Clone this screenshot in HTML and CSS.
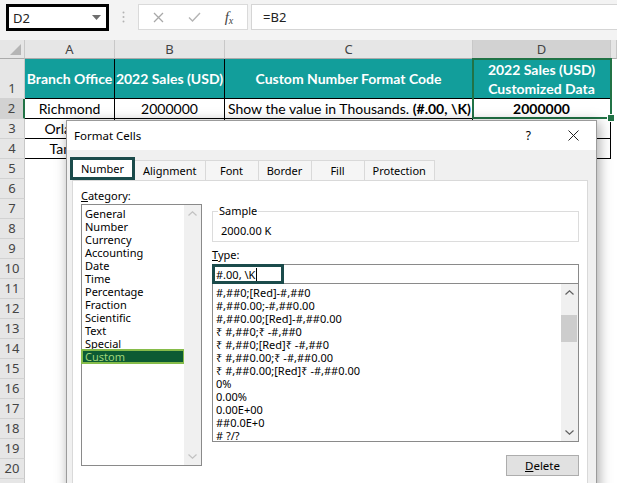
FILE: index.html
```html
<!DOCTYPE html>
<html lang="en">
<head>
    <meta charset="UTF-8">
    <meta name="viewport" content="width=device-width, initial-scale=1.0">
    <title>Format Cells</title>
    <link rel="stylesheet" href="styles.css">
</head>
<body>
    <div class="app">
        <div class="formula-bar">
            <div class="name-box">
                <span>D2</span>
                <svg width="9" height="5" viewBox="0 0 9 5"><polygon points="0,0 9,0 4.5,5" fill="#6e6e6e"/></svg>
            </div>
            <div class="bar-dots">
                <svg width="3" height="12" viewBox="0 0 3 12"><circle cx="1.5" cy="1.5" r="1" fill="#b3b3b3"/><circle cx="1.5" cy="6" r="1" fill="#b3b3b3"/><circle cx="1.5" cy="10.5" r="1" fill="#b3b3b3"/></svg>
            </div>
            <div class="bar-buttons">
                <span class="bar-icon"><svg width="11" height="11" viewBox="0 0 11 11"><path d="M1 1 L10 10 M10 1 L1 10" stroke="#a8a8a8" stroke-width="1.3"/></svg></span>
                <span class="bar-icon"><svg width="13" height="10" viewBox="0 0 13 10"><path d="M1 5.5 L4.5 9 L12 1" fill="none" stroke="#b4b4b4" stroke-width="1.4"/></svg></span>
                <span class="fx">f<span class="fx-sub">x</span></span>
            </div>
            <div class="formula-input">=B2</div>
        </div>

        <div class="sheet">
            <div class="corner"><svg width="11" height="11" viewBox="0 0 11 11"><polygon points="11,0 11,11 0,11" fill="#b5b5b5"/></svg></div>
            <div class="col-head">A</div>
            <div class="col-head">B</div>
            <div class="col-head">C</div>
            <div class="col-head active">D</div>
            <div class="col-head"></div>

            <div class="row-head tall">1</div>
            <div class="cell head">Branch Office</div>
            <div class="cell head">2022 Sales (USD)</div>
            <div class="cell head">Custom Number Format Code</div>
            <div class="cell head">2022 Sales (USD)<br>Customized Data</div>
            <div class="blank"></div>

            <div class="row-head active">2</div>
            <div class="cell">Richmond</div>
            <div class="cell">2000000</div>
            <div class="cell left"><span>Show the value in Thousands. <b>(#.00, \K)</b></span></div>
            <div class="cell"><b>2000000</b></div>
            <div class="blank"></div>

            <div class="row-head">3</div>
            <div class="cell">Orlando</div>
            <div class="cell"></div>
            <div class="cell"></div>
            <div class="cell"></div>
            <div class="blank"></div>

            <div class="row-head">4</div>
            <div class="cell">Tampa</div>
            <div class="cell"></div>
            <div class="cell"></div>
            <div class="cell"></div>
            <div class="blank"></div>

            <div class="row-head">5</div><div class="empty-row"></div>
            <div class="row-head">6</div><div class="empty-row"></div>
            <div class="row-head">7</div><div class="empty-row"></div>
            <div class="row-head">8</div><div class="empty-row"></div>
            <div class="row-head">9</div><div class="empty-row"></div>
            <div class="row-head">10</div><div class="empty-row"></div>
            <div class="row-head">11</div><div class="empty-row"></div>
            <div class="row-head">12</div><div class="empty-row"></div>
            <div class="row-head">13</div><div class="empty-row"></div>
            <div class="row-head">14</div><div class="empty-row"></div>
            <div class="row-head">15</div><div class="empty-row"></div>
            <div class="row-head">16</div><div class="empty-row"></div>
            <div class="row-head">17</div><div class="empty-row"></div>
            <div class="row-head">18</div><div class="empty-row"></div>
            <div class="row-head">19</div><div class="empty-row"></div>
            <div class="row-head">20</div><div class="empty-row"></div>
            <div class="row-head">21</div><div class="empty-row"></div>

            <div class="selection"></div>
        </div>

        <div class="dialog">
            <div class="dialog-title">
                <span>Format Cells</span>
                <span class="title-help">?</span>
                <svg class="title-close" width="11" height="11" viewBox="0 0 11 11"><path d="M0.5 0.5 L10.5 10.5 M10.5 0.5 L0.5 10.5" stroke="#222" stroke-width="1"/></svg>
            </div>
            <div class="dialog-body">
                <div class="tabs">
                    <div class="tab active">Number</div>
                    <div class="tab">Alignment</div>
                    <div class="tab">Font</div>
                    <div class="tab">Border</div>
                    <div class="tab">Fill</div>
                    <div class="tab">Protection</div>
                </div>
                <div class="panel">
                    <div class="cat-col">
                        <div class="label"><u>C</u>ategory:</div>
                        <div class="cat-list">
                            <div class="cat-items">
                                <div class="cat-item">General</div>
                                <div class="cat-item">Number</div>
                                <div class="cat-item">Currency</div>
                                <div class="cat-item">Accounting</div>
                                <div class="cat-item">Date</div>
                                <div class="cat-item">Time</div>
                                <div class="cat-item">Percentage</div>
                                <div class="cat-item">Fraction</div>
                                <div class="cat-item">Scientific</div>
                                <div class="cat-item">Text</div>
                                <div class="cat-item">Special</div>
                                <div class="cat-item selected">Custom</div>
                            </div>
                            <div class="scrollbar disabled">
                                <div class="scroll-arrow"><svg width="9" height="5" viewBox="0 0 9 5"><path d="M0.5 4.5 L4.5 0.8 L8.5 4.5" fill="none" stroke="currentColor" stroke-width="1.2"/></svg></div>
                                <div class="scroll-space"></div>
                                <div class="scroll-arrow"><svg width="9" height="5" viewBox="0 0 9 5"><path d="M0.5 0.5 L4.5 4.2 L8.5 0.5" fill="none" stroke="currentColor" stroke-width="1.2"/></svg></div>
                            </div>
                        </div>
                    </div>
                    <div class="type-col">
                        <fieldset class="sample">
                            <legend>Sample</legend>
                            <div class="sample-value">2000.00 K</div>
                        </fieldset>
                        <div class="label type-label"><u>T</u>ype:</div>
                        <div class="type-field">
                            <span>#.00, \K</span><span class="caret"></span>
                            <div class="type-mark"></div>
                        </div>
                        <div class="type-list">
                            <div class="type-items">
                                <div class="type-item">#,##0;[Red]-#,##0</div>
                                <div class="type-item">#,##0.00;-#,##0.00</div>
                                <div class="type-item">#,##0.00;[Red]-#,##0.00</div>
                                <div class="type-item">₹ #,##0;₹ -#,##0</div>
                                <div class="type-item">₹ #,##0;[Red]₹ -#,##0</div>
                                <div class="type-item">₹ #,##0.00;₹ -#,##0.00</div>
                                <div class="type-item">₹ #,##0.00;[Red]₹ -#,##0.00</div>
                                <div class="type-item">0%</div>
                                <div class="type-item">0.00%</div>
                                <div class="type-item">0.00E+00</div>
                                <div class="type-item">##0.0E+0</div>
                                <div class="type-item"># ?/?</div>
                            </div>
                            <div class="scrollbar">
                                <div class="scroll-arrow"><svg width="9" height="5" viewBox="0 0 9 5"><path d="M0.5 4.5 L4.5 0.8 L8.5 4.5" fill="none" stroke="currentColor" stroke-width="1.2"/></svg></div>
                                <div class="scroll-thumb"></div>
                                <div class="scroll-space"></div>
                                <div class="scroll-arrow"><svg width="9" height="5" viewBox="0 0 9 5"><path d="M0.5 0.5 L4.5 4.2 L8.5 0.5" fill="none" stroke="currentColor" stroke-width="1.2"/></svg></div>
                            </div>
                        </div>
                        <button class="delete-btn"><u>D</u>elete</button>
                    </div>
                </div>
            </div>
        </div>
    </div>
</body>
</html>
```

FILE: styles.css
```css
body { margin: 0; font-family: "Noto Sans", sans-serif; }
.app { position: relative; width: 617px; height: 483px; overflow: hidden; background: #fff; }

/* formula bar */
.formula-bar { display: flex; align-items: flex-start; height: 40px; padding-top: 4px; box-sizing: border-box; background: #f3f3f3; }
.name-box { box-sizing: border-box; width: 103px; height: 27px; margin-left: 6px; border: 3px solid #000; background: #fff; display: flex; align-items: center; justify-content: space-between; padding: 0 5px 0 4px; font-size: 13px; color: #222; }
.bar-dots { width: 29px; height: 26px; display: flex; align-items: center; justify-content: center; }
.bar-buttons { width: 110px; height: 26px; box-sizing: border-box; background: #fff; border: 1px solid #dadada; display: grid; grid-template-columns: 38px 34px 36px; align-items: center; justify-items: center; }
.bar-icon { display: flex; }
.fx { display: flex; align-items: flex-end; font-family: "Liberation Serif", serif; font-style: italic; font-size: 15px; line-height: 14px; color: #444; }
.fx-sub { font-size: 10px; line-height: 8px; margin-bottom: -1px; }
.formula-input { flex: 1; margin-left: 3px; height: 26px; box-sizing: border-box; background: #fff; border: 1px solid #d5d5d5; border-right: none; padding-left: 11px; font-size: 13px; line-height: 24px; color: #222; }

/* sheet */
.sheet { position: relative; display: grid; grid-template-columns: 25px 90px 110px 248px 138px 1fr; grid-template-rows: 19px 40px; grid-auto-rows: 20px; }
.corner, .col-head { background: #e6e6e6; border-right: 1px solid #c8c8c8; border-bottom: 1px solid #ababab; box-sizing: border-box; }
.corner { display: flex; align-items: flex-end; justify-content: flex-end; padding: 0 3px 3px 0; }
.col-head { color: #444; font-size: 13px; text-align: center; line-height: 18px; }
.col-head.active { background: #d2d2d2; }
.row-head { background: #e6e6e6; border-right: 1px solid #c8c8c8; border-bottom: 1px solid #d2d2d2; box-sizing: border-box; color: #444; font-size: 13px; text-align: center; line-height: 19px; }
.row-head.tall { display: flex; align-items: flex-end; justify-content: center; }
.row-head.active { background: #d2d2d2; border-right: 2px solid #217346; }
.cell { box-sizing: border-box; border-right: 1px solid #000; border-bottom: 1px solid #000; font-family: Lato, "Liberation Sans", sans-serif; font-size: 14px; display: flex; align-items: center; justify-content: center; white-space: nowrap; overflow: hidden; }
.cell.head { background: #129e9b; color: #fff; font-weight: bold; text-align: center; line-height: 19px; }
.cell.left { justify-content: flex-start; padding-left: 3px; }
.empty-row { grid-column: 2 / -1; }
/* green selection frame drawn over D1:D2 */
.selection { position: absolute; left: 472px; top: 18px; width: 140px; height: 61px; box-sizing: border-box; border: 2px solid #217346; }
.selection::after { content: ""; position: absolute; right: -5px; bottom: -5px; width: 6px; height: 6px; background: #217346; border: 1px solid #fff; }

/* dialog */
.dialog { position: absolute; left: 66px; top: 120px; width: 531px; height: 380px; box-sizing: border-box; border: 1px solid #9b9b9b; background: #f0f0f0; box-shadow: 2px 2px 12px rgba(0, 0, 0, 0.35); font-size: 11px; color: #000; }
.dialog-title { height: 29px; background: #fff; display: flex; align-items: center; padding-left: 7px; font-size: 11.5px; line-height: 16px; }
.title-help { margin-left: auto; font-size: 12px; }
.title-close { margin: 0 17px 0 37px; }
.dialog-body { padding: 10px 8px 0 5px; }
.tabs { display: flex; align-items: flex-start; height: 20px; }
.tab { height: 20px; min-width: 54px; box-sizing: border-box; border: 1px solid #d9d9d9; border-bottom: none; margin-left: -1px; padding: 0 8px; line-height: 19px; text-align: center; background: #f5f5f5; }
.tab.active { height: 23px; margin: -3px 0 0 -2px; padding: 0 8px; border: 3px solid #1b4b4b; line-height: 17px; background: #fff; position: relative; z-index: 1; }
.panel { display: flex; gap: 10px; height: 320px; background: #fff; border: 1px solid #d9d9d9; padding: 7px 8px 0; }
.label { line-height: 16px; }

.cat-col { width: 121px; }
.cat-list { display: flex; height: 262px; box-sizing: border-box; border: 1px solid #8a8a8a; }
.cat-items { flex: 1; padding-top: 2px; }
.cat-item { line-height: 13px; height: 13px; padding-left: 3px; white-space: nowrap; }
.cat-item.selected { background: #0c5b33; color: #9fd47a; outline: 2px solid #86bc4a; outline-offset: -1px; }

.scrollbar { width: 17px; background: #f0f0f0; display: flex; flex-direction: column; color: #606060; }
.scrollbar.disabled { color: #c2c2c2; }
.scroll-arrow { height: 17px; display: flex; align-items: center; justify-content: center; }
.scroll-space { flex: 1; }
.scroll-thumb { height: 27px; margin: 14px 1px 0 0; background: #cdcdcd; }

.type-col { width: 367px; display: flex; flex-direction: column; }
.sample { margin: 16px 0 0; padding: 0 5px; border: 1px solid #dcdcdc; min-width: 0; }
.sample legend { padding: 0 1px; line-height: 14px; }
.sample-value { padding: 6px 3px 3px; line-height: 14px; }
.type-label { margin-top: 5px; }
.type-field { position: relative; height: 20px; margin-top: 1px; box-sizing: border-box; border: 1px solid #8a8a8a; padding-left: 3px; display: flex; align-items: center; }
.caret { width: 1px; height: 13px; background: #000; margin-left: 1px; }
.type-mark { position: absolute; left: -1px; top: -1px; width: 72px; height: 20px; box-sizing: border-box; border: 3px solid #1b4b4b; }
.type-list { display: flex; height: 158px; box-sizing: border-box; border: 1px solid #8a8a8a; border-top: none; }
.type-items { flex: 1; padding: 2px 0 0 3px; }
.type-item { line-height: 13px; white-space: nowrap; }
.delete-btn { align-self: flex-end; margin-top: 13px; width: 73px; height: 21px; padding: 0; background: #e1e1e1; border: 1px solid #adadad; font-family: "Noto Sans", sans-serif; font-size: 11.5px; color: #000; }
```
